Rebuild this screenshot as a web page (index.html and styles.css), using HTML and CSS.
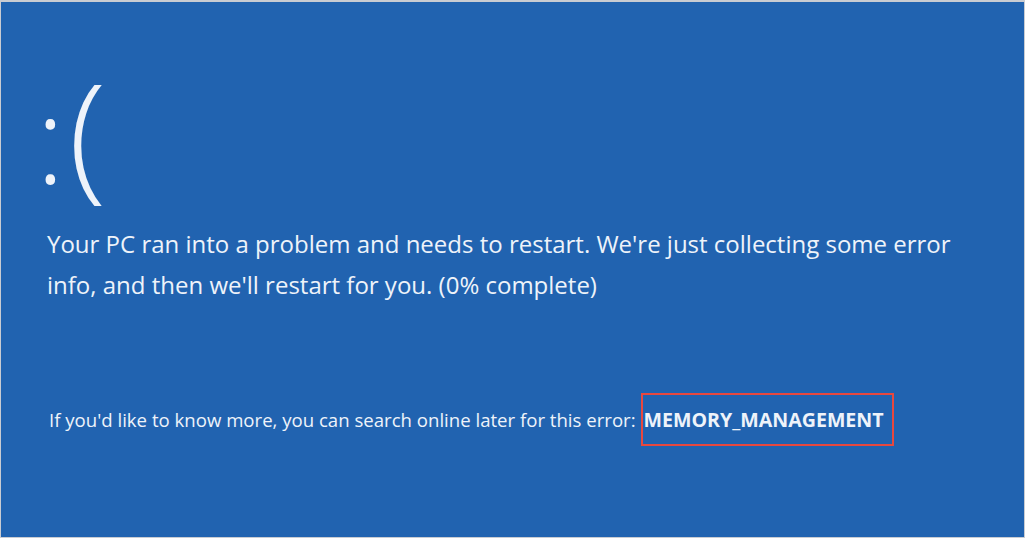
FILE: index.html
```html
<!DOCTYPE html>
<html lang="en">
<head>
  <meta charset="UTF-8" />
  <title>Stop Code</title>
  <link rel="stylesheet" href="styles.css">
</head>
<body>

  <!-- Blue screen frame -->
  <div class="screen">
    <div class="face"><span class="eyes">:</span><span class="mouth">(</span></div>

    <p class="message">
      Your PC ran into a problem and needs to restart. We're just collecting some error<br>
      info, and then we'll restart for you. (0% complete)
    </p>

    <p class="details">
      If you'd like to know more, you can search online later for this error:
      <span class="stop-code">MEMORY_MANAGEMENT</span>
    </p>
  </div>

</body>
</html>
```

FILE: styles.css
```css
body {
  margin: 0;
  background: #fff;
  font-family: "Open Sans", Arial, sans-serif;
}

.screen {
  box-sizing: border-box;
  width: 1025px;
  height: 538px;
  background-color: #2163b0;
  border: 1px solid #c9ccd2;
  border-top-width: 2px;
  color: #eef3fa;
  padding: 51px 0 0 46px;
}

.face {
  font-size: 148px;
  font-weight: 300;
  line-height: 148px;
  height: 170px;
}

.eyes {
  font-size: 120px;
  margin-left: -11px;
}

.mouth {
  font-size: 139px;
  margin-left: 4px;
}

.message {
  margin: 0;
  font-size: 24px;
  line-height: 41px;
}

.details {
  margin: 88px 0 0 2px;
  font-size: 18.6px;
  display: flex;
  align-items: center;
}

.stop-code {
  font-size: 19.6px;
  font-weight: bold;
  border: 2px solid #e8483e;
  padding: 11px 8px 11px 1px;
  margin-left: 5px;
}
```
